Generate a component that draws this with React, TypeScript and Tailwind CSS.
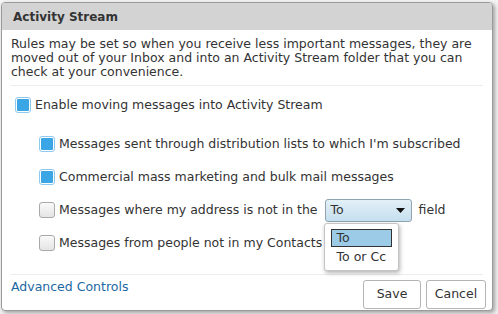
import React from 'react';

function Check({ checked }: { checked: boolean }) {
  if (checked) {
    return (
      <span className="inline-flex h-[16px] w-[16px] shrink-0 items-center justify-center rounded-[3px] border border-[#8ec9ef] bg-white">
        <span className="h-[12px] w-[12px] rounded-[1px] bg-[#3aa6e6]" />
      </span>
    );
  }
  return (
    <span className="inline-block h-[16px] w-[16px] shrink-0 rounded-[3px] border border-[#a9a9a9] bg-gradient-to-b from-[#fafafa] to-[#e4e4e4]" />
  );
}

function Row({ checked, children, indent = false }: { checked: boolean; children: React.ReactNode; indent?: boolean }) {
  return (
    <div className={`flex h-[16px] items-center gap-[4px] ${indent ? 'pl-[28px]' : 'pl-[4px]'}`}>
      <Check checked={checked} />
      <div className="flex items-center whitespace-nowrap">{children}</div>
    </div>
  );
}

export default function App() {
  return (
    <div className="h-[314px] w-[498px] bg-[#f4f4f4] pl-[1px] pt-[2px] text-[12.5px] text-[#333]" style={{ fontFamily: '"DejaVu Sans", sans-serif' }}>
      <div className="flex h-[309px] w-[492px] flex-col overflow-hidden rounded-[4px] border border-[#9a9a9a] bg-white shadow-[2px_2px_4px_rgba(0,0,0,0.35)]">
        <div className="flex h-[27px] shrink-0 items-center bg-[#d3d3d3] px-[11px] text-[12px] font-bold text-[#333]">
          Activity Stream
        </div>
        <div className="px-[9px] pt-[7px] leading-[14px]">
          Rules may be set so when you receive less important messages, they are moved out of your Inbox and into an Activity Stream folder that you can check at your convenience.
        </div>
        <div className="mx-[9px] mt-[6px] border-t border-[#ececec]" />
        <div className="flex flex-col gap-[17px] px-[9px] pt-[11px]">
          <Row checked>Enable moving messages into Activity Stream</Row>
          <div className="flex flex-col gap-[17px] pt-[6px]">
            <Row checked indent>Messages sent through distribution lists to which I'm subscribed</Row>
            <Row checked indent>Commercial mass marketing and bulk mail messages</Row>
            <Row checked={false} indent>
              <span>Messages where my address is not in the</span>
              <span className="relative z-10 ml-[7px] mr-[7px] h-[16px]">
                <span className="absolute left-0 top-[-3px] flex h-[23px] w-[87px] items-center justify-between rounded-[3px] border border-[#8fa3b0] bg-gradient-to-b from-[#e3f0f8] to-[#c6dfee] pl-[5px] pr-[6px]">
                  <span>To</span>
                  <svg width="9" height="5" viewBox="0 0 9 5"><path d="M0 0h9L4.5 5z" fill="#111" /></svg>
                </span>
                <span className="block h-[16px] w-[87px]" />
                <span className="absolute left-[-1px] top-[21px] flex w-[75px] flex-col rounded-[3px] border border-[#c4c4c4] bg-white px-[6px] py-[5px] shadow-[1px_2px_4px_rgba(0,0,0,0.3)]">
                  <span className="block h-[18px] border border-[#333] bg-[#9ccbe8] pl-[5px] leading-[15px]">To</span>
                  <span className="block pl-[6px] pt-[2px] leading-[16px]">To or Cc</span>
                </span>
              </span>
              <span>field</span>
            </Row>
            <Row checked={false} indent>Messages from people not in my Contacts</Row>
          </div>
        </div>
        <div className="mx-[9px] mt-auto border-t border-[#ececec]" />
        <div className="flex items-start justify-between pb-[1px] pl-[9px] pr-[6px] pt-[5px]">
          <a className="leading-[14px] text-[#1c68a3]">Advanced Controls</a>
          <div className="flex gap-[5px]">
            <button className="h-[29px] w-[58px] rounded-[3px] border border-[#b4b4b4] bg-white text-[12.5px] text-[#333]">Save</button>
            <button className="h-[29px] w-[60px] rounded-[3px] border border-[#b4b4b4] bg-white text-[12.5px] text-[#333]">Cancel</button>
          </div>
        </div>
      </div>
    </div>
  );
}
